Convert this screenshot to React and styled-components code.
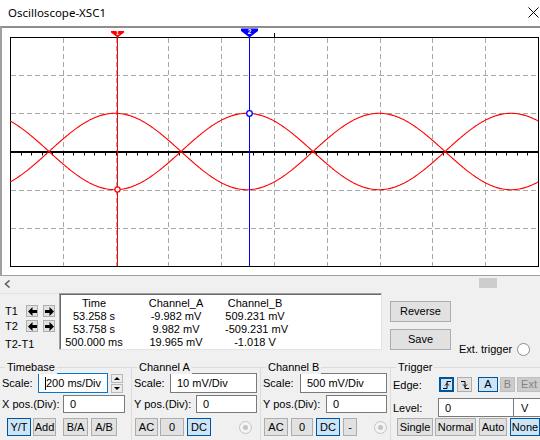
import React from 'react';
import styled, { createGlobalStyle } from 'styled-components';

const GlobalStyle = createGlobalStyle`
  html, body { margin: 0; padding: 0; background: #f0f0f0; }
  body { font-family: "Liberation Sans", Arial, sans-serif; font-size: 11px; color: #000; }
  * { box-sizing: border-box; }
`;

const Window = styled.div`
  width: 540px;
  height: 440px;
  overflow: hidden;
  background: #f0f0f0;
  display: flex;
  flex-direction: column;
`;

const TitleBar = styled.div`
  flex: none;
  height: 26px;
  background: #fff;
  display: flex;
  align-items: center;
  justify-content: space-between;
  padding: 0 1px 2px 8px;
`;

const Title = styled.span`
  font-family: "Noto Sans", "Open Sans", sans-serif;
  font-size: 11.5px;
  color: #000;
`;

const ScopeFrame = styled.div`
  flex: none;
  height: 250px;
  background: #fff;
  border-top: 2px solid #8e8e8e;
  border-left: 2px solid #a0a0a0;
  border-bottom: 1px solid #a0a0a0;
`;

const ScopeSvg = styled.svg`
  display: block;
`;

const ScrollRow = styled.div`
  flex: none;
  height: 14px;
  display: flex;
  align-items: flex-start;
`;

const Chevron = styled.svg`
  margin: 4px 0 0 4px;
`;

const Thumb = styled.div`
  width: 18px;
  height: 10px;
  margin: 2px 43px 0 auto;
  background: #cdcdcd;
`;

const MidPanel = styled.div`
  flex: none;
  height: 77px;
  display: flex;
  align-items: flex-start;
`;

const CursorPanel = styled.div`
  flex: none;
  width: 59px;
  padding-left: 5px;
  display: flex;
  flex-direction: column;
  border-top: 1px solid #e3e3e3;
  margin-top: 3px;
`;

const CursorRow = styled.div`
  display: flex;
  align-items: center;
  height: 12px;
  margin-top: ${p => p.$mt}px;
`;

const CursorLabel = styled.span`
  width: 21px;
  flex: none;
`;

const ArrowBtn = styled.div`
  flex: none;
  width: 12px;
  height: 12px;
  margin-right: 5px;
  background: #e1e1e1;
  border: 1px solid #adadad;
  display: flex;
  align-items: center;
  justify-content: center;
`;

const DiffLabel = styled.div`
  margin-top: 6px;
  line-height: 13px;
`;

const DataBox = styled.div`
  flex: none;
  width: 323px;
  height: 57px;
  margin-top: 3px;
  background: #fff;
  border: 1px solid #a0a0a0;
  border-right-color: #e3e3e3;
  border-bottom-color: #e3e3e3;
  box-shadow: inset 1px 1px 0 #696969;
  padding: 3px 0 0 1px;
  display: grid;
  grid-template-columns: 66px 98px 60px;
  grid-auto-rows: 13px;
`;

const Cell = styled.div`
  text-align: center;
  line-height: 13px;
  white-space: nowrap;
`;

const ButtonCol = styled.div`
  flex: none;
  margin: 11px 0 0 8px;
  display: flex;
  flex-direction: column;
  gap: 7px;
`;

const ExtTrigger = styled.div`
  flex: none;
  margin: 52px 0 0 8px;
  height: 14px;
  display: flex;
  align-items: center;
  gap: 5px;
  white-space: nowrap;
`;

const Radio = styled.span`
  flex: none;
  width: 13px;
  height: 13px;
  margin-left: ${p => p.$ml || 0}px;
  border-radius: 50%;
  border: 1px solid ${p => (p.$off ? '#c4c4c4' : '#8c8c8c')};
  background: ${p => (p.$off ? '#f4f4f4' : '#fff')};
  display: flex;
  align-items: center;
  justify-content: center;
  &::after {
    content: '';
    display: ${p => (p.$off ? 'block' : 'none')};
    width: 5px;
    height: 5px;
    border-radius: 50%;
    background: #c4c4c4;
  }
`;

const GroupsRow = styled.div`
  flex: none;
  height: 73px;
  display: flex;
`;

const GroupBox = styled.div`
  position: relative;
  flex: none;
  width: ${p => p.$w}px;
  border-top: 1px solid #dcdcdc;
  border-right: 1px solid #dcdcdc;
  padding: 5px 0 0 2px;
  display: flex;
  flex-direction: column;
`;

const Legend = styled.span`
  position: absolute;
  top: -7px;
  left: 5px;
  padding: 0 2px;
  line-height: 13px;
  background: #f0f0f0;
  white-space: nowrap;
`;

const Row = styled.div`
  display: flex;
  align-items: center;
  height: ${p => p.$h}px;
  margin-top: ${p => p.$mt || 0}px;
`;

const Label = styled.span`
  flex: none;
  width: ${p => p.$w}px;
  white-space: nowrap;
`;

const TextBox = styled.div`
  flex: none;
  width: ${p => p.$w}px;
  height: ${p => p.$h}px;
  margin-left: ${p => p.$ml || 0}px;
  background: #fff;
  border: 1px solid ${p => (p.$focus ? '#0078d7' : '#7a7a7a')};
  display: flex;
  align-items: center;
  padding-left: ${p => (p.$pl === undefined ? 6 : p.$pl)}px;
  white-space: nowrap;
`;

const Caret = styled.span`
  width: 1px;
  height: 13px;
  background: #000;
`;

const Spinner = styled.div`
  flex: none;
  width: 12px;
  height: 19px;
  margin-left: 3px;
  display: flex;
  flex-direction: column;
  gap: 1px;
`;

const SpinBtn = styled.div`
  flex: 1;
  background: #ececec;
  border: 1px solid #b9b9b9;
  display: flex;
  align-items: center;
  justify-content: center;
`;

const Btn = styled.button`
  flex: none;
  width: ${p => p.$w}px;
  height: ${p => p.$h || 18}px;
  margin: 0 0 0 ${p => p.$ml || 0}px;
  padding: 0;
  font: 11px "Liberation Sans", Arial, sans-serif;
  color: ${p => (p.$off ? '#838383' : '#000')};
  background: ${p => (p.$on ? '#cce4f7' : p.$off ? '#cccccc' : '#e1e1e1')};
  border: 1px solid ${p => (p.$on ? '#005499' : p.$off ? '#bfbfbf' : '#adadad')};
  box-shadow: ${p => (p.$focus ? 'inset 0 0 0 1px #005499' : 'none')};
  display: inline-flex;
  align-items: center;
  justify-content: center;
  line-height: 1;
  white-space: nowrap;
`;

/* ---------- scope drawing ---------- */
const PX0 = 10;
const PX1 = 538;
const PY0 = 37;
const PY1 = 266;
const DX = (PX1 - PX0) / 10;
const DY = (PY1 - PY0) / 6;
const CY = 151.5;

function wave(sign) {
  const pts = [];
  for (let x = PX0; x <= PX1; x += 1) {
    const y = CY - sign * 38.2 * Math.sin((2 * Math.PI * (x - 181)) / 264);
    pts.push(`${x},${y.toFixed(2)}`);
  }
  return pts.join(' ');
}

function Scope() {
  const vlines = [];
  for (let i = 1; i < 10; i++) vlines.push(Math.round(PX0 + DX * i) + 0.5);
  const hlines = [];
  for (let j = 1; j < 6; j++) if (j !== 3) hlines.push(Math.round(PY0 + DY * j) + 0.5);
  const ticks = [];
  for (let k = 1; k < 50; k++) ticks.push(Math.round(PX0 + (DX / 5) * k) + 0.5);

  return (
    <ScopeSvg width="538" height="247" viewBox="2 28 538 247">
      <rect x="2" y="28" width="538" height="247" fill="#fff" />
      <rect x={PX0 + 0.5} y={PY0 + 0.5} width={PX1 - PX0} height={PY1 - PY0} fill="#fff" stroke="#000" strokeWidth="1" />
      {vlines.map(x => (
        <line key={'v' + x} x1={x} y1={PY0 + 1} x2={x} y2={PY1} stroke="#a8a8a8" strokeWidth="1" strokeDasharray="5 3" />
      ))}
      {hlines.map(y => (
        <line key={'h' + y} x1={PX0 + 1} y1={y} x2={PX1} y2={y} stroke="#a8a8a8" strokeWidth="1" strokeDasharray="5 3" />
      ))}
      <line x1={PX0} y1="152" x2={PX1 + 1} y2="152" stroke="#000" strokeWidth="2" />
      {ticks.map(x => (
        <line key={'t' + x} x1={x} y1="152" x2={x} y2="155.5" stroke="#000" strokeWidth="1" />
      ))}
      <line x1="274.5" y1="33" x2="274.5" y2="38" stroke="#000" strokeWidth="1" />
      <polyline points={wave(1)} fill="none" stroke="#ff0000" strokeWidth="1.1" />
      <polyline points={wave(-1)} fill="none" stroke="#ff0000" strokeWidth="1.1" />
      <line x1="117.5" y1={PY0} x2="117.5" y2={PY1} stroke="#ff0000" strokeWidth="1" />
      <line x1="249.5" y1={PY0} x2="249.5" y2={PY1} stroke="#0000ff" strokeWidth="1" />
      <polygon points="111,31 124,31 124,32.5 117.5,37.5 111,32.5" fill="#ff0000" />
      <text x="117.5" y="35.3" fontSize="5.5" fontWeight="bold" fill="#fff" textAnchor="middle" fontFamily="Liberation Sans, Arial, sans-serif">1</text>
      <polygon points="241,28.5 258,28.5 258,31 249.5,37.5 241,31" fill="#0000ff" />
      <text x="249.5" y="33.8" fontSize="6.5" fontWeight="bold" fill="#fff" textAnchor="middle" fontFamily="Liberation Sans, Arial, sans-serif">2</text>
      <circle cx="117.5" cy="189.5" r="2.6" fill="#fff" stroke="#ff0000" strokeWidth="1.2" />
      <circle cx="249.5" cy="113.5" r="2.8" fill="#fff" stroke="#0000ff" strokeWidth="1.3" />
    </ScopeSvg>
  );
}

const LeftArrow = () => (
  <svg width="9" height="9" viewBox="0 0 9 9">
    <polygon points="0,4.5 4.5,0 4.5,3 9,3 9,6 4.5,6 4.5,9" fill="#000" />
  </svg>
);
const RightArrow = () => (
  <svg width="9" height="9" viewBox="0 0 9 9">
    <polygon points="9,4.5 4.5,0 4.5,3 0,3 0,6 4.5,6 4.5,9" fill="#000" />
  </svg>
);

const RisingEdge = () => (
  <svg width="10" height="10" viewBox="0 0 10 10">
    <path d="M1 8.5 H5 V1.5 H9" fill="none" stroke="#000" strokeWidth="1" />
    <path d="M3 5.5 L5 3.5 L7 5.5" fill="none" stroke="#000" strokeWidth="1" />
  </svg>
);
const FallingEdge = () => (
  <svg width="10" height="10" viewBox="0 0 10 10">
    <path d="M1 1.5 H5 V8.5 H9" fill="none" stroke="#000" strokeWidth="1" />
    <path d="M3 4.5 L5 6.5 L7 4.5" fill="none" stroke="#000" strokeWidth="1" />
  </svg>
);

export default function App() {
  return (
    <>
      <GlobalStyle />
      <Window>
        <TitleBar>
          <Title>Oscilloscope-XSC1</Title>
          <svg width="11" height="11" viewBox="0 0 11 11">
            <path d="M0.5 0.5 L10.5 10.5 M10.5 0.5 L0.5 10.5" stroke="#000" strokeWidth="1" />
          </svg>
        </TitleBar>

        <ScopeFrame>
          <Scope />
        </ScopeFrame>

        <ScrollRow>
          <Chevron width="7" height="8" viewBox="0 0 7 8">
            <path d="M5.5 0.5 L1.5 4 L5.5 7.5" fill="none" stroke="#606060" strokeWidth="1.6" />
          </Chevron>
          <Thumb />
        </ScrollRow>

        <MidPanel>
          <CursorPanel>
            <CursorRow $mt={11}>
              <CursorLabel>T1</CursorLabel>
              <ArrowBtn><LeftArrow /></ArrowBtn>
              <ArrowBtn><RightArrow /></ArrowBtn>
            </CursorRow>
            <CursorRow $mt={3}>
              <CursorLabel>T2</CursorLabel>
              <ArrowBtn><LeftArrow /></ArrowBtn>
              <ArrowBtn><RightArrow /></ArrowBtn>
            </CursorRow>
            <DiffLabel>T2-T1</DiffLabel>
          </CursorPanel>

          <DataBox>
            <Cell>Time</Cell>
            <Cell>Channel_A</Cell>
            <Cell>Channel_B</Cell>
            <Cell>53.258 s</Cell>
            <Cell>-9.982 mV</Cell>
            <Cell>509.231 mV</Cell>
            <Cell>53.758 s</Cell>
            <Cell>9.982 mV</Cell>
            <Cell>-509.231 mV</Cell>
            <Cell>500.000 ms</Cell>
            <Cell>19.965 mV</Cell>
            <Cell>-1.018 V</Cell>
          </DataBox>

          <ButtonCol>
            <Btn $w={61} $h={21}>Reverse</Btn>
            <Btn $w={61} $h={21}>Save</Btn>
          </ButtonCol>

          <ExtTrigger>
            Ext. trigger
            <Radio />
          </ExtTrigger>
        </MidPanel>

        <GroupsRow>
          <GroupBox $w={132}>
            <Legend>Timebase</Legend>
            <Row $h={20}>
              <Label $w={36}>Scale:</Label>
              <TextBox $w={70} $h={20} $focus $pl={6}>
                <Caret />200 ms/Div
              </TextBox>
              <Spinner>
                <SpinBtn>
                  <svg width="6" height="3" viewBox="0 0 6 3"><polygon points="0,3 3,0 6,3" fill="#000" /></svg>
                </SpinBtn>
                <SpinBtn>
                  <svg width="6" height="3" viewBox="0 0 6 3"><polygon points="0,0 6,0 3,3" fill="#000" /></svg>
                </SpinBtn>
              </Spinner>
            </Row>
            <Row $h={18} $mt={2}>
              <Label $w={61}>X pos.(Div):</Label>
              <TextBox $w={62} $h={18}>0</TextBox>
            </Row>
            <Row $h={18} $mt={5}>
              <Btn $w={24} $ml={5} $on>Y/T</Btn>
              <Btn $w={23} $ml={2}>Add</Btn>
              <Btn $w={25} $ml={7}>B/A</Btn>
              <Btn $w={26} $ml={3}>A/B</Btn>
            </Row>
          </GroupBox>

          <GroupBox $w={129}>
            <Legend>Channel A</Legend>
            <Row $h={20}>
              <Label $w={36}>Scale:</Label>
              <TextBox $w={87} $h={20}>10 mV/Div</TextBox>
            </Row>
            <Row $h={18} $mt={2}>
              <Label $w={62}>Y pos.(Div):</Label>
              <TextBox $w={61} $h={18}>0</TextBox>
            </Row>
            <Row $h={18} $mt={5}>
              <Btn $w={23} $ml={1}>AC</Btn>
              <Btn $w={24} $ml={2}>0</Btn>
              <Btn $w={24} $ml={3} $on>DC</Btn>
              <Radio $off $ml={28} />
            </Row>
          </GroupBox>

          <GroupBox $w={130}>
            <Legend>Channel B</Legend>
            <Row $h={20}>
              <Label $w={37}>Scale:</Label>
              <TextBox $w={87} $h={20}>500 mV/Div</TextBox>
            </Row>
            <Row $h={18} $mt={2}>
              <Label $w={63}>Y pos.(Div):</Label>
              <TextBox $w={61} $h={18}>0</TextBox>
            </Row>
            <Row $h={18} $mt={5}>
              <Btn $w={24} $ml={1}>AC</Btn>
              <Btn $w={22} $ml={3}>0</Btn>
              <Btn $w={24} $ml={3} $on>DC</Btn>
              <Btn $w={14} $ml={3}>-</Btn>
              <Radio $off $ml={17} />
            </Row>
          </GroupBox>

          <GroupBox $w={160}>
            <Legend>Trigger</Legend>
            <Row $h={17} $mt={3}>
              <Label $w={46}>Edge:</Label>
              <Btn $w={15} $h={15} $on $focus><RisingEdge /></Btn>
              <Btn $w={15} $h={15} $ml={3}><FallingEdge /></Btn>
              <Btn $w={20} $h={15} $ml={6} $on>A</Btn>
              <Btn $w={15} $h={15} $ml={2} $off>B</Btn>
              <Btn $w={24} $h={15} $ml={2} $off>Ext</Btn>
            </Row>
            <Row $h={19} $mt={5}>
              <Label $w={45}>Level:</Label>
              <TextBox $w={76} $h={19}>0</TextBox>
              <TextBox $w={28} $h={19} $ml={-1} $pl={7}>V</TextBox>
            </Row>
            <Row $h={18} $mt={1}>
              <Btn $w={36} $ml={4}>Single</Btn>
              <Btn $w={41} $ml={2}>Normal</Btn>
              <Btn $w={28} $ml={3}>Auto</Btn>
              <Btn $w={30} $ml={3} $on>None</Btn>
            </Row>
          </GroupBox>
        </GroupsRow>
      </Window>
    </>
  );
}
